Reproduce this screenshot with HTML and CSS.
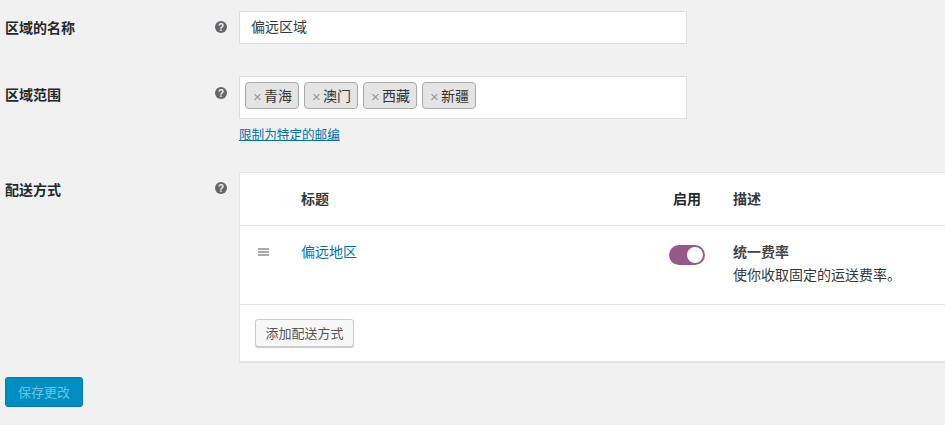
FILE: index.html
```html
<!DOCTYPE html>
<html lang="zh-CN">
<head>
<meta charset="utf-8">
<title>配送区域</title>
<link rel="stylesheet" href="styles.css">
</head>
<body>
<form class="page">
  <div class="row row-name">
    <div class="label">区域的名称</div>
    <div class="help"><svg viewBox="0 0 12 12" width="12" height="12"><circle cx="6" cy="6" r="6" fill="#666"/><text x="6" y="9.6" class="help-q">?</text></svg></div>
    <div class="field"><div class="input">偏远区域</div></div>
  </div>
  <div class="row row-range">
    <div class="label">区域范围</div>
    <div class="help"><svg viewBox="0 0 12 12" width="12" height="12"><circle cx="6" cy="6" r="6" fill="#666"/><text x="6" y="9.6" class="help-q">?</text></svg></div>
    <div class="field">
      <div class="tags">
        <span class="tag"><span class="x">×</span>青海</span>
        <span class="tag"><span class="x">×</span>澳门</span>
        <span class="tag"><span class="x">×</span>西藏</span>
        <span class="tag"><span class="x">×</span>新疆</span>
      </div>
      <a class="limit" href="#">限制为特定的邮编</a>
    </div>
  </div>
  <div class="row row-methods">
    <div class="label">配送方式</div>
    <div class="help"><svg viewBox="0 0 12 12" width="12" height="12"><circle cx="6" cy="6" r="6" fill="#666"/><text x="6" y="9.6" class="help-q">?</text></svg></div>
    <div class="table">
      <div class="t-head">
        <div class="c-drag"></div>
        <div class="c-title">标题</div>
        <div class="c-on">启用</div>
        <div class="c-desc">描述</div>
      </div>
      <div class="t-row">
        <div class="c-drag"><span class="drag"></span></div>
        <div class="c-title"><a href="#">偏远地区</a></div>
        <div class="c-on"><span class="toggle"><span class="knob"></span></span></div>
        <div class="c-desc"><strong>统一费率</strong><p>使你收取固定的运送费率。</p></div>
      </div>
      <div class="t-foot"><button type="button" class="btn">添加配送方式</button></div>
    </div>
  </div>
  <button type="button" class="save">保存更改</button>
</form>
</body>
</html>
```
FILE: styles.css
```css
* { box-sizing: border-box; }
html, body { margin: 0; height: 425px; overflow: hidden; }
body {
  background: #f1f1f1;
  color: #444;
  font-family: "Noto Sans CJK SC", "Liberation Sans", sans-serif;
  font-size: 14px;
  line-height: 20px;
}
.page { width: 945px; padding: 11px 0 0 5px; }
.row { display: grid; grid-template-columns: 210px 24px 1fr; }
.row-name { height: 65px; }
.row-range { height: 96px; }
.row-methods { height: 205px; }
.label { font-weight: 700; color: #23282d; padding-top: 7px; }
.row-name .label { padding-top: 6px; }
.row-range .label { padding-top: 8px; }
.help { padding-top: 10px; height: 24px; line-height: 0; }
.row-range .help { padding-top: 11px; }
.help-q { font: 700 10px "Liberation Sans", sans-serif; fill: #f1f1f1; text-anchor: middle; }
.field { width: 448px; }
.input {
  height: 33px;
  background: #fff;
  border: 1px solid #ddd;
  padding: 4px 11px;
  color: #32373c;
}
.tags {
  height: 43px;
  background: #fff;
  border: 1px solid #ddd;
  padding: 5px;
  display: flex;
  gap: 5px;
  align-items: flex-start;
}
.tag {
  height: 27px;
  width: 54px;
  background: #e4e4e4;
  border: 1px solid #aaa;
  border-radius: 4px;
  padding: 2px 0 0 7px;
  color: #333;
  display: flex;
  white-space: nowrap;
}
.x { color: #999; width: 11px; font-size: 15px; font-family: "Liberation Sans", sans-serif; padding-top: 2px; }
.limit {
  display: block;
  margin-top: 5px;
  font-size: 12.6px;
  color: #0073aa;
  text-decoration: underline;
}
.table {
  width: 706px;
  height: 191px;
  background: #fff;
  border-top: 1px solid #e5e5e5;
  border-left: 1px solid #e5e5e5;
  border-bottom: 2px solid #e5e5e5;
}
.t-head, .t-row { display: grid; grid-template-columns: 61px 372px 60px 1fr; }
.t-head { height: 53px; border-bottom: 1px solid #e5e5e5; font-weight: 700; color: #32373c; padding-top: 15px; }
.t-row { height: 79px; padding-top: 15px; border-bottom: 1px solid #e5e5e5; }
.t-head .c-on { color: #23282d; }
.c-title a { color: #0073aa; text-decoration: none; }
.c-drag { padding-left: 18px; }
.drag {
  display: block;
  width: 11px;
  height: 8px;
  margin-top: 7px;
  background: repeating-linear-gradient(#a8a8a8 0 2px, #fff 2px 3px);
}
.toggle {
  display: block;
  width: 36px;
  height: 20px;
  margin: 4px 0 0 -4px;
  background: #96588a;
  border-radius: 10px;
  position: relative;
}
.knob {
  position: absolute;
  top: 2px;
  right: 2px;
  width: 16px;
  height: 16px;
  background: #fff;
  border-radius: 50%;
}
.c-desc strong { display: block; color: #444; font-weight: 700; }
.c-desc p { margin: 3px 0 0; color: #32373c; }
.t-foot { padding: 14px 15px; }
.btn {
  display: block;
  width: 99px;
  height: 28px;
  padding: 0;
  background: #f7f7f7;
  border: 1px solid #ccc;
  border-radius: 3px;
  box-shadow: 0 1px 0 #ccc;
  color: #555;
  font: 13px/26px "Noto Sans CJK SC", sans-serif;
}
.save {
  display: block;
  width: 78px;
  height: 30px;
  padding: 0;
  background: #008ec2;
  border: 1px solid #007cb2;
  border-radius: 3px;
  color: #66c6e4;
  font: 13px/28px "Noto Sans CJK SC", sans-serif;
}
```
